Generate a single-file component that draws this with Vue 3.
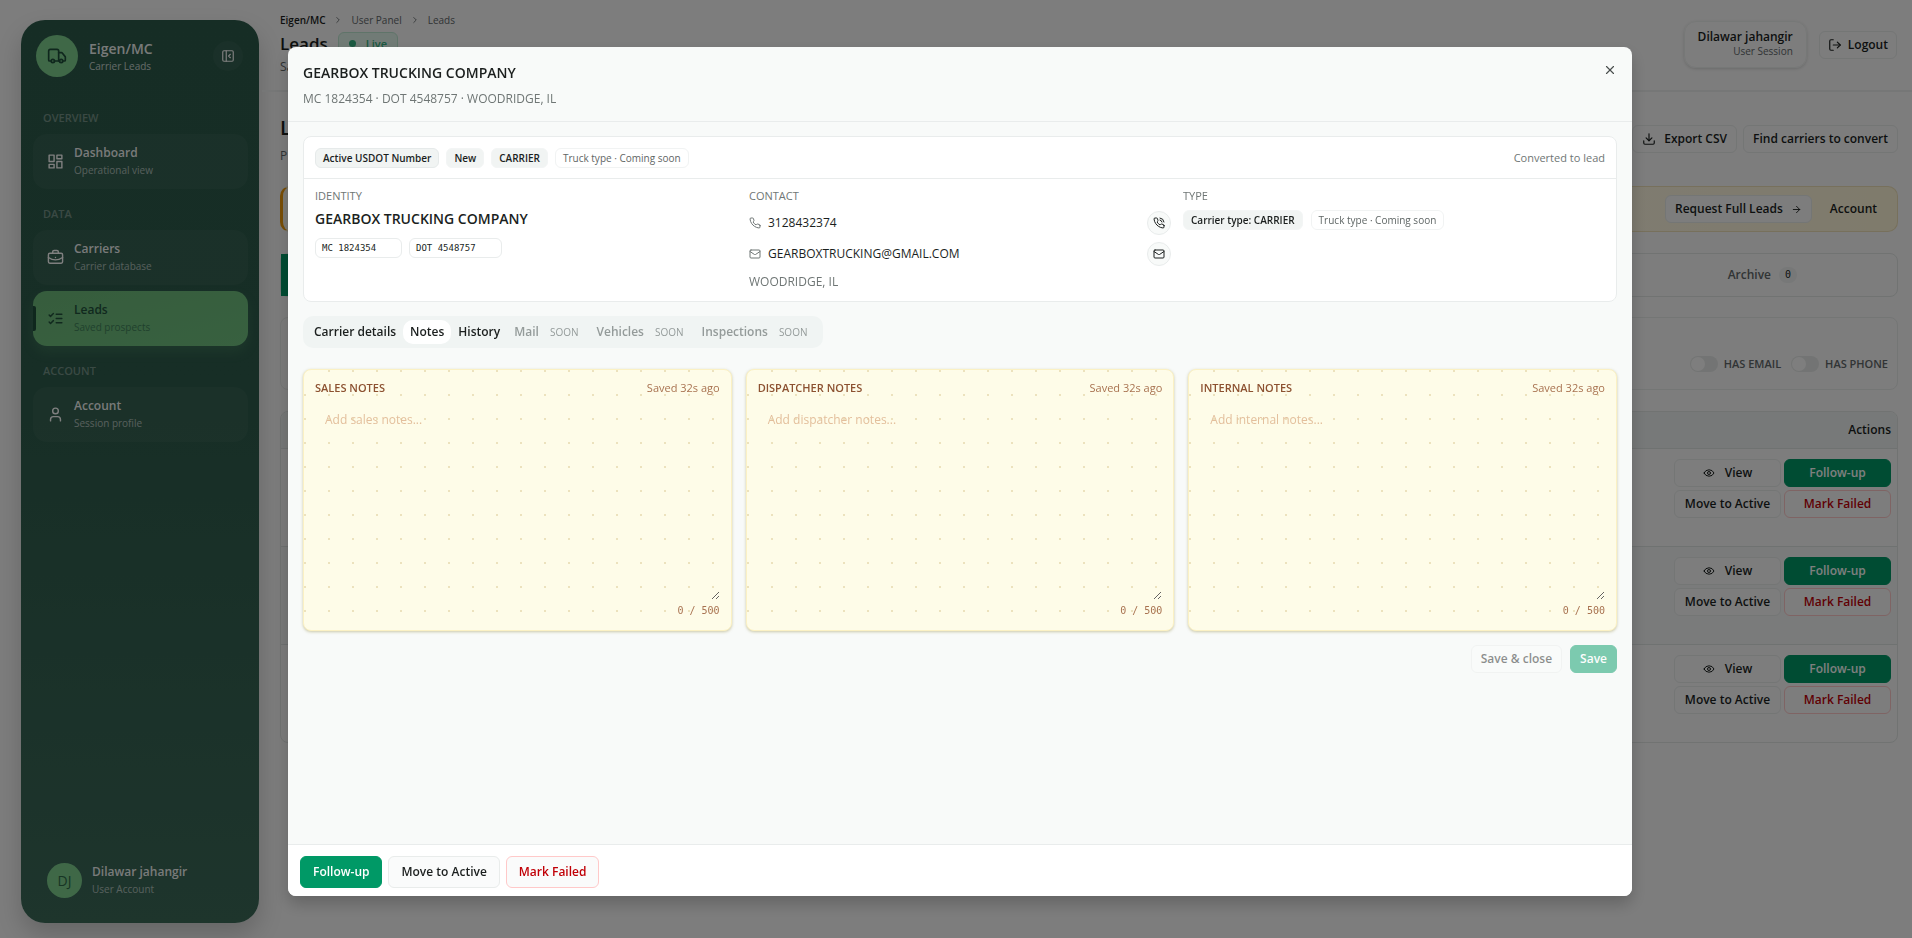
<script setup>
import { ref } from 'vue'

const groups = [
  { title: 'Overview', items: [{ name: 'Dashboard', hint: 'Operational view', icon: 'grid' }] },
  {
    title: 'Data',
    items: [
      { name: 'Carriers', hint: 'Carrier database', icon: 'case' },
      { name: 'Leads', hint: 'Saved prospects', icon: 'list', active: true },
    ],
  },
  { title: 'Account', items: [{ name: 'Account', hint: 'Session profile', icon: 'user' }] },
]

const icons = {
  truck: ['M14 18V6a2 2 0 0 0-2-2H4a2 2 0 0 0-2 2v11a1 1 0 0 0 1 1h2', 'M15 18H9', 'M19 18h2a1 1 0 0 0 1-1v-3.65a1 1 0 0 0-.22-.62l-3.48-4.35A1 1 0 0 0 17.52 8H14', 'M9 18a2 2 0 1 1-4 0a2 2 0 1 1 4 0', 'M19 18a2 2 0 1 1-4 0a2 2 0 1 1 4 0'],
  panel: ['M5 3h14a2 2 0 0 1 2 2v14a2 2 0 0 1-2 2H5a2 2 0 0 1-2-2V5a2 2 0 0 1 2-2z', 'M9 3v18', 'M16 15l-3-3l3-3'],
  grid: ['M3 3h7v9H3z', 'M14 3h7v5h-7z', 'M14 12h7v9h-7z', 'M3 16h7v5H3z'],
  case: ['M16 6V4a2 2 0 0 0-2-2h-4a2 2 0 0 0-2 2v2', 'M4 6h16a2 2 0 0 1 2 2v10a2 2 0 0 1-2 2H4a2 2 0 0 1-2-2V8a2 2 0 0 1 2-2z', 'M22 12a18 18 0 0 1-20 0', 'M12 12h.01'],
  list: ['M3 17l2 2l4-4', 'M3 7l2 2l4-4', 'M13 6h8', 'M13 12h8', 'M13 18h8'],
  user: ['M19 21v-2a4 4 0 0 0-4-4H9a4 4 0 0 0-4 4v2', 'M16 7a4 4 0 1 1-8 0a4 4 0 1 1 8 0'],
  logout: ['M9 21H5a2 2 0 0 1-2-2V5a2 2 0 0 1 2-2h4', 'M16 17l5-5l-5-5', 'M21 12H9'],
  download: ['M21 15v4a2 2 0 0 1-2 2H5a2 2 0 0 1-2-2v-4', 'M7 10l5 5l5-5', 'M12 15V3'],
  arrow: ['M5 12h14', 'M12 5l7 7l-7 7'],
  eye: ['M2 12a11 11 0 0 1 20 0a11 11 0 0 1-20 0', 'M15 12a3 3 0 1 1-6 0a3 3 0 1 1 6 0'],
  close: ['M18 6L6 18', 'M6 6l12 12'],
  chevron: ['M9 18l6-6l-6-6'],
  phone: ['M22 16.92v3a2 2 0 0 1-2.18 2a19.8 19.8 0 0 1-8.63-3.07a19.5 19.5 0 0 1-6-6a19.8 19.8 0 0 1-3.07-8.67A2 2 0 0 1 4.11 2h3a2 2 0 0 1 2 1.72c.13.96.36 1.9.7 2.81a2 2 0 0 1-.45 2.11L8.09 9.91a16 16 0 0 0 6 6l1.27-1.27a2 2 0 0 1 2.11-.45c.91.34 1.85.57 2.81.7A2 2 0 0 1 22 16.92z'],
  waves: ['M14 2a9 9 0 0 1 8 8', 'M14 6a5 5 0 0 1 4 4'],
  mail: ['M4 4h16a2 2 0 0 1 2 2v12a2 2 0 0 1-2 2H4a2 2 0 0 1-2-2V6a2 2 0 0 1 2-2z', 'M22 7l-9 6a2 2 0 0 1-2 0L2 7'],
}
icons.call = [...icons.phone, ...icons.waves]

const tabs = [
  { label: 'Carrier details' },
  { label: 'Notes' },
  { label: 'History' },
  { label: 'Mail', soon: true },
  { label: 'Vehicles', soon: true },
  { label: 'Inspections', soon: true },
]
const activeTab = ref('Notes')

const notes = ref([
  { id: 'sales', title: 'Sales notes', placeholder: 'Add sales notes...', text: '' },
  { id: 'dispatcher', title: 'Dispatcher notes', placeholder: 'Add dispatcher notes...', text: '' },
  { id: 'internal', title: 'Internal notes', placeholder: 'Add internal notes...', text: '' },
])
const rows = [1, 2, 3]
</script>

<template>
  <div class="shell">
    <div class="rail">
      <aside class="sidebar">
        <div class="brand">
          <span class="logo"><svg viewBox="0 0 24 24"><path v-for="d in icons.truck" :key="d" :d="d" /></svg></span>
          <div class="two">
            <strong class="brand-name">Eigen/MC</strong>
            <span>Carrier Leads</span>
          </div>
          <button class="collapse" aria-label="Collapse sidebar"><svg viewBox="0 0 24 24"><path v-for="d in icons.panel" :key="d" :d="d" /></svg></button>
        </div>
        <nav>
          <section v-for="g in groups" :key="g.title">
            <h3>{{ g.title }}</h3>
            <a v-for="i in g.items" :key="i.name" href="#" class="nav" :class="{ active: i.active }">
              <svg viewBox="0 0 24 24"><path v-for="d in icons[i.icon]" :key="d" :d="d" /></svg>
              <span class="two"><strong>{{ i.name }}</strong><span>{{ i.hint }}</span></span>
            </a>
          </section>
        </nav>
        <div class="me">
          <span class="avatar">DJ</span>
          <div class="two"><strong>Dilawar jahangir</strong><span>User Account</span></div>
        </div>
      </aside>
    </div>

    <div class="page">
      <header class="top">
        <div class="crumbs">
          <div class="trail">
            <strong>Eigen/MC</strong>
            <svg viewBox="0 0 24 24"><path :d="icons.chevron[0]" /></svg>
            <span>User Panel</span>
            <svg viewBox="0 0 24 24"><path :d="icons.chevron[0]" /></svg>
            <span>Leads</span>
          </div>
          <div class="heading"><h1>Leads</h1><span class="live"><i></i>Live</span></div>
          <p>Sa</p>
        </div>
        <div class="session"><strong>Dilawar jahangir</strong><span>User Session</span></div>
        <button class="btn logout"><svg viewBox="0 0 24 24"><path v-for="d in icons.logout" :key="d" :d="d" /></svg>Logout</button>
      </header>

      <main class="main">
        <div class="title-row">
          <div><h2>L</h2><p>P</p></div>
          <div class="title-actions">
            <button class="btn"><svg viewBox="0 0 24 24"><path v-for="d in icons.download" :key="d" :d="d" /></svg>Export CSV</button>
            <button class="btn">Find carriers to convert</button>
          </div>
        </div>

        <div class="banner">
          <button class="btn">Request Full Leads<svg viewBox="0 0 24 24"><path v-for="d in icons.arrow" :key="d" :d="d" /></svg></button>
          <a href="#">Account</a>
        </div>

        <div class="stages">
          <div class="stage on"></div>
          <div class="stage last">Archive <b>0</b></div>
        </div>

        <div class="filters">
          <label><input type="checkbox" />Has email</label>
          <label><input type="checkbox" />Has phone</label>
        </div>

        <div class="table-card">
          <table>
            <thead><tr><th>Actions</th></tr></thead>
            <tbody>
              <tr v-for="r in rows" :key="r">
                <td>
                  <div class="actions">
                    <button class="btn"><svg class="small" viewBox="0 0 24 24"><path v-for="d in icons.eye" :key="d" :d="d" /></svg>View</button>
                    <button class="btn primary">Follow-up</button>
                    <button class="btn">Move to Active</button>
                    <button class="btn danger">Mark Failed</button>
                  </div>
                </td>
              </tr>
            </tbody>
          </table>
        </div>
      </main>
    </div>

    <div class="overlay">
      <div class="modal" role="dialog" aria-labelledby="modal-title">
        <header class="modal-head">
          <div>
            <h2 id="modal-title">GEARBOX TRUCKING COMPANY</h2>
            <p>MC 1824354 · DOT 4548757 · WOODRIDGE, IL</p>
          </div>
          <button class="x" aria-label="Close"><svg viewBox="0 0 24 24"><path v-for="d in icons.close" :key="d" :d="d" /></svg></button>
        </header>

        <div class="modal-body">
          <section class="card">
            <div class="card-top">
              <span class="chip edge">Active USDOT Number</span>
              <span class="chip">New</span>
              <span class="chip">CARRIER</span>
              <span class="chip ghost">Truck type · Coming soon</span>
              <span class="when">Converted to lead</span>
            </div>
            <div class="facts">
              <div>
                <h4>IDENTITY</h4>
                <h3>GEARBOX TRUCKING COMPANY</h3>
                <div class="codes"><span class="code">MC 1824354</span><span class="code wide">DOT 4548757</span></div>
              </div>
              <div>
                <h4>CONTACT</h4>
                <div class="line">
                  <svg viewBox="0 0 24 24"><path :d="icons.phone[0]" /></svg><span>3128432374</span>
                  <button class="round" aria-label="Call"><svg viewBox="0 0 24 24"><path v-for="d in icons.call" :key="d" :d="d" /></svg></button>
                </div>
                <div class="line">
                  <svg viewBox="0 0 24 24"><path v-for="d in icons.mail" :key="d" :d="d" /></svg><span>GEARBOXTRUCKING@GMAIL.COM</span>
                  <button class="round" aria-label="Email"><svg viewBox="0 0 24 24"><path v-for="d in icons.mail" :key="d" :d="d" /></svg></button>
                </div>
                <p>WOODRIDGE, IL</p>
              </div>
              <div>
                <h4>TYPE</h4>
                <div class="types"><span class="chip">Carrier type: CARRIER</span><span class="chip ghost">Truck type · Coming soon</span></div>
              </div>
            </div>
          </section>

          <div class="tabs" role="tablist">
            <button
              v-for="t in tabs" :key="t.label" role="tab" :disabled="t.soon"
              :class="{ on: activeTab === t.label }" @click="activeTab = t.label"
            >{{ t.label }}<small v-if="t.soon">SOON</small></button>
          </div>

          <div class="notes">
            <section v-for="n in notes" :key="n.id" class="note">
              <div class="note-head"><label :for="n.id">{{ n.title }}</label><span>Saved 32s ago</span></div>
              <textarea :id="n.id" v-model="n.text" :placeholder="n.placeholder" maxlength="500"></textarea>
              <div class="count">{{ n.text.length }} / 500</div>
            </section>
          </div>

          <div class="save-row">
            <button class="btn" disabled>Save &amp; close</button>
            <button class="btn primary" disabled>Save</button>
          </div>
        </div>

        <footer class="modal-foot">
          <button class="btn primary">Follow-up</button>
          <button class="btn">Move to Active</button>
          <button class="btn danger">Mark Failed</button>
        </footer>
      </div>
    </div>
  </div>
</template>

<style>
body {
  background: #fafafa;
  overflow: hidden;
}
</style>

<style scoped>
* {
  box-sizing: border-box;
  margin: 0;
}
.shell {
  display: flex;
  min-height: 100vh;
  font-family: "Open Sans", "Noto Sans", sans-serif;
  font-size: 12px;
  line-height: 16px;
  color: #1b1f1e;
}
svg {
  width: 14px;
  height: 14px;
  flex: none;
  fill: none;
  stroke: currentColor;
  stroke-width: 2;
  stroke-linecap: round;
  stroke-linejoin: round;
}
svg.small {
  width: 12px;
  height: 12px;
}
button {
  font: inherit;
  color: inherit;
  background: none;
  border: 0;
  padding: 0;
}
a {
  color: inherit;
  text-decoration: none;
}
.btn {
  display: inline-flex;
  align-items: center;
  justify-content: center;
  gap: 10px;
  height: 28px;
  padding: 0 9px;
  border: 1px solid #e9eceb;
  border-radius: 6px;
  background: #fafbfb;
  font-weight: 600;
  white-space: nowrap;
}
.btn.primary {
  background: #009966;
  border-color: #009966;
  color: #fff;
}
.btn.danger {
  border-color: #ffc9c9;
  color: #c10007;
}
.btn:disabled {
  opacity: 0.5;
}

/* Sidebar */
.rail {
  flex: none;
  width: 262px;
  height: 100vh;
  padding: 20px 3px 15px 21px;
}
.sidebar {
  display: flex;
  flex-direction: column;
  height: 100%;
  padding: 15px 11px 17px 12px;
  border-radius: 24px;
  background: linear-gradient(#2d5b4b, #2e5c4c 40%, #3c6a59);
  box-shadow: 0 12px 24px rgba(0, 0, 0, 0.18);
  color: #fff;
}
.two {
  display: flex;
  flex-direction: column;
  font-size: 10px;
  line-height: 17px;
  color: rgba(255, 255, 255, 0.6);
}
.two strong {
  font-size: 12px;
  line-height: 18px;
  font-weight: 600;
  color: rgba(255, 255, 255, 0.95);
}
.brand {
  display: flex;
  align-items: center;
  padding: 0 5px 0 3px;
  gap: 11px;
}
.brand .two {
  flex: 1;
  padding-top: 2px;
  color: rgba(255, 255, 255, 0.75);
}
.two .brand-name {
  font-size: 14px;
}
.logo {
  display: grid;
  place-items: center;
  width: 42px;
  height: 42px;
  border-radius: 50%;
  background: #7ed08f;
  color: #1f4f3a;
}
.logo svg {
  width: 20px;
  height: 20px;
}
.collapse {
  display: grid;
  place-items: center;
  width: 30px;
  height: 30px;
  border-radius: 50%;
  background: rgba(255, 255, 255, 0.04);
}
nav {
  display: flex;
  flex-direction: column;
  gap: 13px;
  margin-top: 29px;
}
nav h3 {
  padding: 4px 10px 8px;
  font-size: 11px;
  font-weight: 600;
  text-transform: uppercase;
  color: rgba(255, 255, 255, 0.35);
}
.nav {
  display: flex;
  align-items: center;
  gap: 10px;
  height: 55px;
  padding: 0 15px 0 14px;
  border-radius: 14px;
  background: rgba(255, 255, 255, 0.04);
}
.nav + .nav {
  margin-top: 6px;
}
.nav svg {
  width: 17px;
  height: 17px;
}
.nav.active {
  position: relative;
  background: linear-gradient(165deg, #6dba7a, #70c280);
  box-shadow: 0 6px 12px rgba(110, 190, 125, 0.2);
  color: #22523c;
}
.nav.active::before {
  content: "";
  position: absolute;
  left: 0;
  top: 15px;
  width: 3px;
  height: 25px;
  border-radius: 0 2px 2px 0;
  background: #1f4f3a;
}
.nav.active strong {
  color: #22523c;
}
.nav.active .two {
  color: #40825a;
}
.me {
  display: flex;
  align-items: center;
  gap: 10px;
  margin-top: auto;
  padding: 8px 14px;
  border-radius: 14px;
}
.avatar {
  display: grid;
  place-items: center;
  width: 35px;
  height: 35px;
  border-radius: 50%;
  background: #7ed08f;
  color: #2e6a48;
  font-size: 14px;
  font-weight: 500;
}

/* Page behind the dialog */
.page {
  flex: 1;
  min-width: 0;
}
.top {
  display: flex;
  align-items: center;
  gap: 12px;
  height: 92px;
  padding: 0 15px 0 18px;
  border-bottom: 2px solid #eceeee;
}
.crumbs {
  flex: 1;
  align-self: flex-start;
  padding-top: 12px;
  color: #62686a;
}
.trail {
  display: flex;
  align-items: center;
  gap: 8px;
  font-size: 10px;
}
.trail strong {
  font-weight: 600;
  color: #1b1f1e;
}
.trail svg {
  width: 10px;
  height: 10px;
}
.heading {
  display: flex;
  align-items: center;
  gap: 10px;
  height: 31px;
}
h1 {
  font-size: 17px;
  font-weight: 600;
  color: #1b1f1e;
}
.live {
  display: flex;
  align-items: center;
  gap: 10px;
  height: 24px;
  padding: 0 10px;
  border: 1px solid #bfe8d3;
  border-radius: 6px;
  background: #e2f6ec;
  color: #35b383;
  font-size: 11px;
  font-weight: 600;
}
.live i {
  width: 7px;
  height: 7px;
  border-radius: 50%;
  background: #35b383;
}
.session {
  display: flex;
  flex-direction: column;
  align-items: flex-end;
  justify-content: center;
  height: 47px;
  padding: 0 13px;
  margin-bottom: 2px;
  border: 1px solid #edf0ef;
  border-radius: 12px;
  box-shadow: 0 1px 3px rgba(0, 0, 0, 0.15);
  font-size: 10px;
  line-height: 15px;
  color: #62686a;
}
.session strong {
  font-size: 12px;
  font-weight: 600;
  color: #1b1f1e;
}
.btn.logout {
  gap: 6px;
  padding: 0 8px;
}
.main {
  padding: 24px 14px 0 18px;
}
.title-row {
  display: flex;
  justify-content: space-between;
  height: 70px;
  color: #62686a;
}
.title-row h2 {
  margin-bottom: 8px;
  font-size: 20px;
  line-height: 24px;
  font-weight: 600;
  color: #1b1f1e;
}
.title-actions {
  display: flex;
  gap: 6px;
  padding-top: 9px;
  color: #1b1f1e;
}
.title-actions .btn {
  gap: 8px;
}
.banner {
  display: flex;
  align-items: center;
  justify-content: flex-end;
  gap: 18px;
  height: 46px;
  padding-right: 20px;
  border: 1px solid #eee0b8;
  border-left: 3px solid #f59e0b;
  border-radius: 10px;
  background: linear-gradient(90deg, #fdfaf0 60%, #fff6d8);
  font-weight: 600;
}
.banner .btn {
  gap: 8px;
}
.banner svg {
  width: 11px;
  height: 11px;
}
.stages {
  display: grid;
  grid-template-columns: repeat(6, 1fr);
  height: 44px;
  margin-top: 21px;
  border: 1px solid #e2e6e5;
  border-radius: 8px;
  font-weight: 600;
}
.stage {
  display: flex;
  align-items: center;
  justify-content: center;
  gap: 8px;
  color: #62686a;
}
.stage.last {
  grid-column: 6;
}
.stage.on {
  background: #009966;
}
.stage b {
  padding: 0 6px;
  border-radius: 8px;
  background: #eef0f0;
  font: 10px/16px "DejaVu Sans Mono", monospace;
  color: #1b1f1e;
}
.filters {
  display: flex;
  align-items: center;
  justify-content: flex-end;
  gap: 10px;
  height: 73px;
  padding: 20px 9px 0 0;
  margin-top: 20px;
  border: 1px solid #e9eceb;
  border-radius: 8px;
  color: #62686a;
}
.filters label {
  display: flex;
  align-items: center;
  gap: 6px;
  font-size: 11px;
  font-weight: 600;
  text-transform: uppercase;
}
.filters input {
  appearance: none;
  display: flex;
  width: 28px;
  height: 16px;
  margin: 0;
  padding: 1px;
  border-radius: 8px;
  background: #e6e9e8;
}
.filters input::before {
  content: "";
  width: 14px;
  height: 14px;
  border-radius: 50%;
  background: #fcfcfc;
}
.table-card {
  margin-top: 21px;
  border: 1px solid #e2e6e5;
  border-radius: 8px;
  overflow: hidden;
}
table {
  width: 100%;
  border-collapse: collapse;
}
th {
  height: 36px;
  padding: 0 6px;
  background: #eff3f2;
  text-align: right;
  font-weight: 600;
}
tr {
  border-bottom: 1px solid #dfe4e3;
}
tbody tr:last-child {
  border-bottom: 0;
}
tbody tr:nth-child(even) {
  background: #f4f7f6;
}
td {
  height: 98px;
  padding: 10px 6px 0;
  vertical-align: top;
}
.actions {
  display: grid;
  grid-template-columns: 107px 107px;
  justify-content: end;
  gap: 3px;
}

/* Dialog */
.overlay {
  position: fixed;
  inset: 0;
  display: flex;
  justify-content: center;
  padding: 47px 24px 42px 32px;
  background: rgba(0, 0, 0, 0.5);
}
.modal {
  display: flex;
  flex-direction: column;
  width: 100%;
  max-width: 1344px;
  border-radius: 8px;
  overflow: hidden;
  background: #f8faf9;
  box-shadow: 0 8px 16px rgba(0, 0, 0, 0.2);
}
.modal-head {
  display: flex;
  justify-content: space-between;
  align-items: flex-start;
  padding: 16px 15px 14px;
  border-bottom: 1px solid #e9ecec;
}
.modal-head h2,
.facts h3 {
  font-size: 14px;
  line-height: 20px;
  font-weight: 600;
}
.modal-head p {
  margin-top: 7px;
  line-height: 17px;
  color: #6f7675;
}
.x {
  display: grid;
  padding: 0;
  color: #4a4f4e;
}
.modal-body {
  flex: 1;
  padding: 14px 15px;
}
.card {
  border: 1px solid #e9ecec;
  border-radius: 8px;
  background: #fff;
}
.card-top {
  display: flex;
  align-items: center;
  gap: 7px;
  height: 42px;
  padding: 0 11px;
  border-bottom: 1px solid #e9ecec;
}
.chip {
  height: 20px;
  padding: 0 7px;
  border: 1px solid #f3f5f5;
  border-radius: 6px;
  background: #f1f4f3;
  font-size: 10px;
  line-height: 18px;
  font-weight: 600;
  white-space: nowrap;
}
.chip.edge {
  border-color: #e6eaea;
}
.chip.ghost {
  background: none;
  border-color: #f1f3f3;
  font-weight: 500;
  color: #5f6665;
}
.when {
  margin-left: auto;
  font-size: 11px;
  color: #6f7675;
}
.facts {
  display: grid;
  grid-template-columns: repeat(3, 1fr);
  gap: 12px;
  padding: 9px 11px 11px;
}
.facts h4 {
  font-size: 11px;
  font-weight: 400;
  color: #6f7675;
}
.facts h3 {
  margin-top: 5px;
}
.codes {
  display: flex;
  gap: 7px;
  margin-top: 9px;
}
.code {
  width: 87px;
  height: 20px;
  padding: 0 6px;
  border: 1px solid #e9ecec;
  border-radius: 6px;
  font: 9px/18px "DejaVu Sans Mono", monospace;
}
.code.wide {
  width: 93px;
}
.line {
  display: flex;
  align-items: center;
  gap: 7px;
  height: 25px;
  margin-top: 6px;
}
.line > svg {
  width: 12px;
  height: 12px;
  color: #6f7675;
}
.round {
  display: grid;
  place-items: center;
  width: 24px;
  height: 24px;
  margin-left: auto;
  border: 1px solid #e9ecec;
  border-radius: 50%;
  background: #f8faf9;
}
.round svg {
  width: 12px;
  height: 12px;
}
.facts p {
  margin-top: 8px;
  color: #6f7675;
}
.types {
  display: flex;
  gap: 8px;
  margin-top: 6px;
}
.tabs {
  display: flex;
  width: fit-content;
  margin-top: 14px;
  padding: 4px 5px 4px 4px;
  border-radius: 10px;
  background: #f0f4f3;
}
.tabs button {
  display: flex;
  align-items: center;
  height: 24px;
  padding: 0 7px;
  border-radius: 10px;
  font-weight: 600;
}
.tabs button.on {
  background: #fff;
}
.tabs button:disabled {
  color: #949b9a;
}
.tabs small {
  margin-left: 11px;
  padding-right: 4px;
  font-size: 10px;
  font-weight: 400;
}
.notes {
  display: grid;
  grid-template-columns: repeat(3, 1fr);
  gap: 14px;
  margin-top: 21px;
}
.note {
  padding: 10px 11px 11px;
  border: 1px solid #fbf1c4;
  border-radius: 8px;
  background: radial-gradient(circle at 1px 1px, #ece2bd 1px, transparent 1px) 0 0 / 24px 24px #fefce8;
  box-shadow: 0 1px 3px rgba(120, 110, 20, 0.35);
  font-size: 11px;
  color: #a87250;
}
.note-head {
  display: flex;
  justify-content: space-between;
}
.note-head label {
  font-weight: 600;
  text-transform: uppercase;
  color: #8c5130;
}
textarea {
  display: block;
  width: 100%;
  height: 196px;
  margin-top: 8px;
  padding: 7px 10px;
  border: 0;
  outline: 0;
  background: transparent;
  resize: vertical;
  font: 12px/18px "Open Sans", "Noto Sans", sans-serif;
  color: #7b3306;
}
textarea::placeholder {
  color: #e3bf9c;
}
.count {
  margin-top: 3px;
  text-align: right;
  font: 10px/16px "DejaVu Sans Mono", monospace;
}
.save-row {
  display: flex;
  justify-content: flex-end;
  gap: 8px;
  margin-top: 14px;
}
.modal-foot {
  display: flex;
  gap: 6px;
  padding: 11px 12px 8px;
  border-top: 1px solid #e9ecec;
  background: #fff;
}
.modal-foot .btn {
  height: 32px;
  padding: 0 12px;
}
</style>
